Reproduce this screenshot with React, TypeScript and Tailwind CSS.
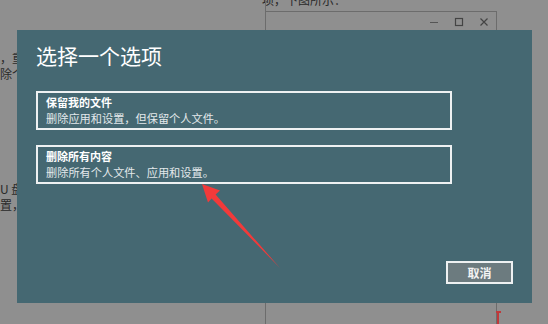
import React from "react";

const cjk = { fontFamily: '"Noto Sans CJK SC", "Noto Sans", sans-serif' };

export default function App() {
  return (
    <div className="relative w-[548px] h-[324px] overflow-hidden bg-[#8f8f8f]" style={cjk}>
      {/* background document text */}
      <div className="absolute left-[0px] top-[50px] text-[12px] leading-[16px] text-[#2a2a2a]">
        <div>，重</div>
        <div>除个</div>
      </div>
      <div className="absolute left-[0px] top-[181px] text-[12px] leading-[16px] text-[#2a2a2a]">
        <div>U 盘</div>
        <div>置，</div>
      </div>
      <div className="absolute left-[262px] top-[-8px] text-[12px] leading-[16px] text-[#2a2a2a]">项，下图所示：</div>

      {/* background window frame */}
      <div className="absolute left-[265px] top-[0px] w-px h-[324px] bg-[#6c6c6c]" />
      <div className="absolute left-[265px] top-[11px] w-[232px] h-[330px] border border-[#6c6c6c]">
        <div className="flex justify-end items-center h-[19px] pr-[7px] gap-[15px]">
          <svg width="10" height="10" viewBox="0 0 10 10"><path d="M1 5.5h8" stroke="#555" strokeWidth="1" /></svg>
          <svg width="10" height="10" viewBox="0 0 10 10"><rect x="1.5" y="1.5" width="7" height="7" fill="none" stroke="#444" strokeWidth="1.2" /></svg>
          <svg width="10" height="10" viewBox="0 0 10 10"><path d="M1.5 1.5l7 7M8.5 1.5l-7 7" stroke="#444" strokeWidth="1.2" /></svg>
        </div>
      </div>
      <div className="absolute left-[497px] top-[311px] w-[2px] h-[14px] bg-[#c0393b]" />
      <div className="absolute left-[496px] top-[311px] w-[5px] h-[2px] bg-[#c0393b]" />

      {/* dialog */}
      <div className="absolute left-[17px] top-[30px] w-[515px] h-[273px] bg-[#456872] flex flex-col pl-[19px] pr-[19px] pt-[11px] pb-[19px]">
        <div className="text-[21px] leading-[28px] text-white font-normal">选择一个选项</div>
        <div className="mt-[22px] w-[416px] h-[39px] border-2 border-[#eef1f2] pl-[8px] pt-[2px]">
          <div className="text-[11px] leading-[15px] font-bold text-white">保留我的文件</div>
          <div className="text-[11.2px] leading-[17px] text-[#e3e9eb]">删除应用和设置，但保留个人文件。</div>
        </div>
        <div className="mt-[15px] w-[416px] h-[39px] border-2 border-[#eef1f2] pl-[8px] pt-[2px]">
          <div className="text-[11px] leading-[15px] font-bold text-white">删除所有内容</div>
          <div className="text-[11.2px] leading-[17px] text-[#e3e9eb]">删除所有个人文件、应用和设置。</div>
        </div>
        <div className="mt-auto flex justify-end">
          <div className="w-[67px] h-[23px] border-2 border-[#eef1f2] bg-[#6c7b7f] flex items-center justify-center text-[12px] font-bold text-[#f2f2f2]">取消</div>
        </div>
      </div>

      {/* red arrow */}
      <svg className="absolute left-0 top-0" width="548" height="324" viewBox="0 0 548 324">
        <polygon points="202,184 220,190.5 215.6,194.6 280,268 211.6,198.4 208,202.5" fill="#f23a3a" />
      </svg>
    </div>
  );
}
